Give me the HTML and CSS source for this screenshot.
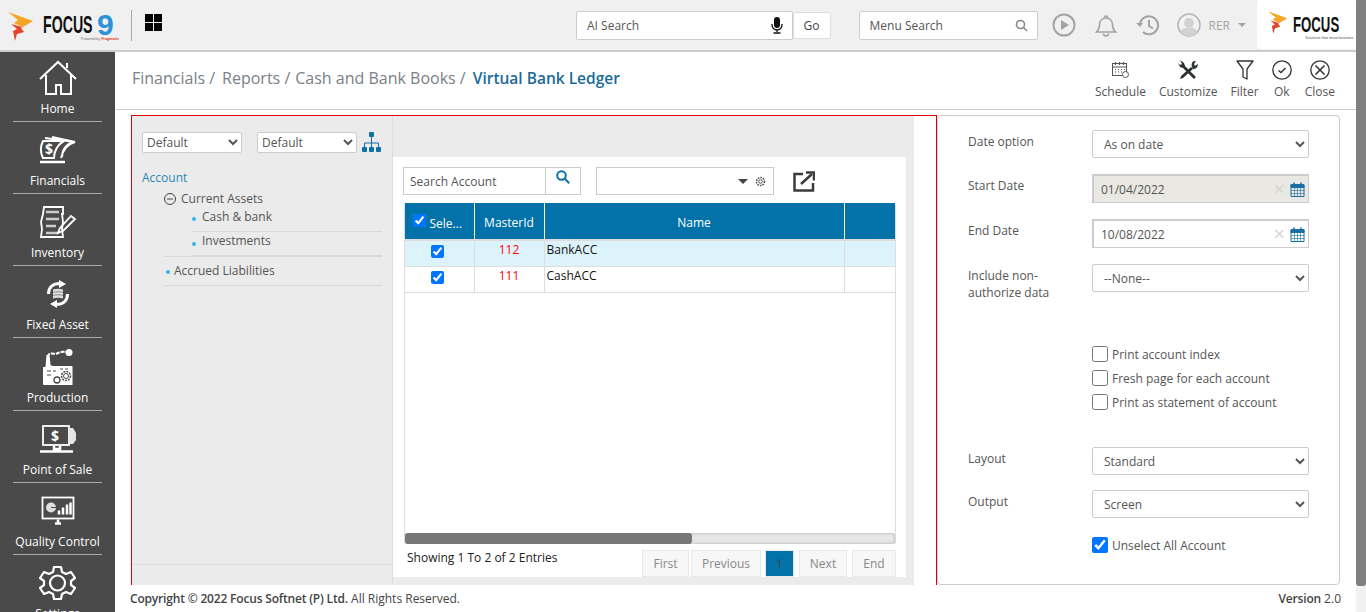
FILE: index.html
```html
<!DOCTYPE html>
<html lang="en">
<head>
    <meta charset="UTF-8">
    <meta name="viewport" content="width=device-width, initial-scale=1.0">
    <title>Virtual Bank Ledger</title>
    <link rel="stylesheet" href="styles.css">
</head>
<body>
<div class="page">
    <div class="topbar">
        <div class="brand">
            <svg class="brand-mark" width="26" height="29" viewBox="0 0 26 29">
                <polygon points="0,0 25,9 14,15 6,11 10,8" fill="#f5a623"/>
                <polygon points="25,9 13,16 16,20 9,22 7,29 5,19 9,17 3,12 14,15" fill="#e2452a"/>
            </svg>
            <div class="brand-name">
                <div class="brand-line"><span class="brand-focus">FOCUS</span><span class="brand-nine">9</span></div>
                <div class="brand-tag">Powered by <b>Pragmatic</b></div>
            </div>
        </div>
        <div class="top-divider"></div>
        <svg class="apps" width="17" height="17" viewBox="0 0 17 17" fill="#000">
            <rect width="8" height="8"/><rect x="9" width="8" height="8"/>
            <rect y="9" width="8" height="8"/><rect x="9" y="9" width="8" height="8"/>
        </svg>

        <div class="ai-search">
            <input class="top-input" type="text" placeholder="AI Search">
            <svg width="12" height="17" viewBox="0 0 12 17">
                <rect x="3" y="0" width="6" height="11" rx="3" fill="#111"/>
                <path d="M1 7v1a5 5 0 0 0 10 0V7M6 13v2M2.500 16h7" fill="none" stroke="#111" stroke-width="1.300"/>
            </svg>
        </div>
        <button class="go-btn">Go</button>
        <div class="menu-search">
            <input class="top-input" type="text" placeholder="Menu Search">
            <svg width="13" height="13" viewBox="0 0 13 13" fill="none" stroke="#888" stroke-width="1.600">
                <circle cx="5.500" cy="5.500" r="4"/><path d="M8.500 8.500l3.500 3.500"/>
            </svg>
        </div>

        <div class="top-icons">
            <svg width="24" height="24" viewBox="0 0 24 24" fill="none" stroke="#a3a3a3" stroke-width="2">
                <circle cx="12" cy="12" r="10.500"/><polygon points="9,7 17,12 9,17" fill="#a3a3a3" stroke="none"/>
            </svg>
            <svg width="22" height="24" viewBox="0 0 22 24" fill="none" stroke="#a3a3a3" stroke-width="1.600">
                <path d="M1.500 19c2-2 3-3 3-7 0-4 2.500-7 6.500-7s6.500 3 6.500 7c0 4 1 5 3 7z"/>
                <path d="M9.500 4.500a1.500 1.500 0 0 1 3 0M8.500 20.500a2.500 2.500 0 0 0 5 0"/>
            </svg>
            <svg width="24" height="22" viewBox="0 0 24 22" fill="none" stroke="#a3a3a3" stroke-width="2">
                <path d="M4 11a9 9 0 1 1 3 7"/><path d="M13 6v6l4 2.500"/>
                <polygon points="0,9 7,9 4,13" fill="#a3a3a3" stroke="none"/>
            </svg>
            <svg class="avatar" width="24" height="24" viewBox="0 0 24 24">
                <circle cx="12" cy="12" r="11" fill="#f2f2f2" stroke="#b5b5b5" stroke-width="1.500"/>
                <circle cx="12" cy="10" r="5" fill="#d2d2d2"/>
                <path d="M3.500 19c2-4 5-4.500 8.500-4.500s6.500.5 8.500 4.500a11 11 0 0 1-17 0z" fill="#d2d2d2"/>
            </svg>
            <span class="user-name">RER</span>
            <span class="user-caret"></span>
        </div>

        <div class="company-logo">
            <svg width="20" height="25" viewBox="0 0 26 29">
                <polygon points="0,0 25,9 14,15 6,11 10,8" fill="#f5a623"/>
                <polygon points="25,9 13,16 16,20 9,22 7,29 5,19 9,17 3,12 14,15" fill="#e2452a"/>
            </svg>
            <div class="company-name">
                <div class="company-focus"><span>FOCUS</span></div>
                <div class="company-tag">Solutions that move business</div>
            </div>
        </div>
    </div>

    <div class="workspace">
        <div class="sidebar">
            <div class="side-item">
                <svg width="38" height="36" viewBox="0 0 38 36" fill="none" stroke="#fff" stroke-width="2">
                    <path d="M1 19L19 2l18 17M28 8V3M7 15v19h10v-9h5v9h10V15"/>
                </svg>
                <span>Home</span>
            </div>
            <div class="side-item">
                <svg width="38" height="28" viewBox="0 0 38 28" fill="none" stroke="#fff" stroke-width="2">
                    <path d="M4 5C1 11 1 16 4 22h11c0-7 4-14 10-17z"/>
                    <path d="M6 2l30 4c-8 2-12 8-14 16M13 1l23 5c-9 1-13 8-13 15"/>
                    <path d="M1 26h25" stroke-width="2.500"/>
                    <text x="6" y="18" class="icon-dollar">$</text>
                </svg>
                <span>Financials</span>
            </div>
            <div class="side-item">
                <svg width="38" height="32" viewBox="0 0 38 32" fill="none" stroke="#fff" stroke-width="1.800">
                    <path d="M5 1h19v7h-1l1 8-1 7 1 8H2l1-8-1-7 2-8z"/>
                    <path d="M7 6h13M7 13h13M7 20h10M7 27h13" stroke-width="2.500" stroke="#ccc"/>
                    <path d="M21 22l11-12 4 3-12 12-5 2z"/>
                </svg>
                <span>Inventory</span>
            </div>
            <div class="side-item">
                <svg width="24" height="28" viewBox="0 0 24 28" fill="none" stroke="#fff" stroke-width="3">
                    <path d="M2.500 14C2.500 7 7 3.500 14 3.500"/>
                    <path d="M21.500 14c0 7-4.500 10.500-11.500 10.500"/>
                    <polygon points="13,0 20,4 13,8" fill="#fff" stroke="none"/>
                    <polygon points="11,20 4,24 11,28" fill="#fff" stroke="none"/>
                    <path d="M7 9.500c3-1 7-1 10 0v9c-3-1-7-1-10 0z" fill="#ddd" stroke="none"/>
                    <path d="M7 12.500c3-1 7-1 10 0M7 15.500c3-1 7-1 10 0" stroke="#777" stroke-width=".8"/>
                </svg>
                <span>Fixed Asset</span>
            </div>
            <div class="side-item">
                <svg width="32" height="36" viewBox="0 0 32 36" fill="#fff">
                    <path d="M2 36a1 1 0 0 1-1-1V18h2.500l1-12h3l1 10 2 1h19a1 1 0 0 1 1 1v18z"/>
                    <path d="M6 8c0-3 2-4 4-3.500s4 .5 6-.5 5-1 8-1.500" fill="none" stroke="#fff" stroke-width="2" stroke-dasharray="4 1"/>
                    <circle cx="27" cy="3.500" r="3.500"/>
                    <circle cx="24" cy="27" r="4.500" fill="none" stroke="#4a4a4a" stroke-width="1.500" stroke-dasharray="2 1"/>
                    <circle cx="24" cy="27" r="2.500" fill="none" stroke="#4a4a4a"/>
                    <circle cx="15" cy="31" r="3" fill="none" stroke="#4a4a4a" stroke-width="1.300"/>
                    <path d="M5 22h4M11 22h3M18 20h3M23 20h3M5 26h4" stroke="#888" stroke-width="1.300"/>
                </svg>
                <span>Production</span>
            </div>
            <div class="side-item">
                <svg width="38" height="28" viewBox="0 0 38 28" fill="none" stroke="#fff" stroke-width="1.800">
                    <rect x="4" y="1" width="26" height="19"/>
                    <path d="M30 3h4l3 5v7l-3 4h-4z" fill="#e6e6e6" stroke="none"/>
                    <path d="M15 21v3h6v-3M1 26.500h33" stroke-width="2.500"/>
                    <text x="12" y="16" class="icon-dollar">$</text>
                </svg>
                <span>Point of Sale</span>
            </div>
            <div class="side-item">
                <svg width="34" height="29" viewBox="0 0 34 29" fill="none" stroke="#fff" stroke-width="1.800">
                    <rect x="1.500" y="1" width="31" height="21"/>
                    <circle cx="10" cy="11" r="5" fill="#ddd" stroke="none"/>
                    <path d="M10 11l5 0" stroke="#4a4a4a" stroke-width="1"/>
                    <path d="M18 18v-4M22 18v-7M26 18V8M29.500 18V6" stroke-width="2.500"/>
                    <path d="M14 27h6M17 23v3" stroke-width="2.500"/>
                </svg>
                <span>Quality Control</span>
            </div>
            <div class="side-item">
                <svg width="37" height="36" viewBox="0 0 37 36" fill="none" stroke="#fff" stroke-width="2.200">
                    <circle cx="18.500" cy="18" r="7.500"/>
                    <path d="M15 2h7l1 5 4 2 5-2 4 6-4 3v4l4 3-4 6-5-2-4 2-1 5h-7l-1-5-4-2-5 2-4-6 4-3v-4l-4-3 4-6 5 2 4-2z" stroke-linejoin="round"/>
                </svg>
                <span>Settings</span>
            </div>
        </div>

        <div class="main">
            <div class="page-head">
                <div class="breadcrumb">
                    <span class="crumb-first">Financials /</span><span>Reports /</span><span>Cash and Bank Books /</span>
                    <strong>Virtual Bank Ledger</strong>
                </div>
                <div class="actions">
                    <div class="action">
                        <svg width="20" height="18" viewBox="0 0 20 18" fill="none" stroke="#555">
                            <rect x="2.500" y="2.500" width="14" height="12"/>
                            <path d="M2.500 6h14M5.500 1v3M9.500 1v3M13.500 1v3M5 8.500h1M8 8.500h1M11 8.500h1M14 8.500h1M5 11h1M8 11h1M11 11h1M14 11h1" stroke-width="1.200"/>
                            <circle cx="15.500" cy="13.500" r="3" fill="#fff"/>
                        </svg>
                        <span>Schedule</span>
                    </div>
                    <div class="action">
                        <svg width="22" height="20" viewBox="0 0 22 20" fill="#2e3133">
                            <path d="M2 1l4 3 1 3 11 11-2 2L5 9 2 8 0 4l2 2 2-1z" transform="translate(1 -1)"/>
                            <path d="M14 7L4 16l-1 3 3-1 10-9zM15 7c-1-3 0-6 3-6l1 0-2 3 1 2 3-2c0 3-2 5-5 5z"/>
                        </svg>
                        <span>Customize</span>
                    </div>
                    <div class="action">
                        <svg width="18" height="20" viewBox="0 0 18 20" fill="none" stroke="#333" stroke-width="1.300">
                            <path d="M1 1h16l-6 8v10l-4-2V9z" stroke-linejoin="round"/>
                        </svg>
                        <span>Filter</span>
                    </div>
                    <div class="action">
                        <svg width="20" height="20" viewBox="0 0 20 20" fill="none" stroke="#333" stroke-width="1.300">
                            <circle cx="10" cy="10" r="9.200"/><path d="M6.500 10.500l2.500 2 4.500-4.500" stroke-width="1.500"/>
                        </svg>
                        <span>Ok</span>
                    </div>
                    <div class="action">
                        <svg width="20" height="20" viewBox="0 0 20 20" fill="none" stroke="#333" stroke-width="1.300">
                            <circle cx="10" cy="10" r="9.200"/><path d="M5.500 5.500l9 9M14.500 5.500l-9 9" stroke-width="1.600"/>
                        </svg>
                        <span>Close</span>
                    </div>
                </div>
            </div>

            <div class="content">
                <div class="selection">
                    <div class="tree-panel">
                        <div class="tree-tools">
                            <select class="tree-select"><option>Default</option></select>
                            <select class="tree-select"><option>Default</option></select>
                            <svg width="19" height="21" viewBox="0 0 19 21" fill="#106fa5">
                                <rect x="7" y="0" width="5" height="5" rx="1"/>
                                <path d="M9.500 5v10M2.500 15v-4h14v4" fill="none" stroke="#106fa5"/>
                                <rect x="0" y="15" width="5" height="5" rx="1"/><rect x="7" y="15" width="5" height="5" rx="1"/><rect x="14" y="15" width="5" height="5" rx="1"/>
                            </svg>
                        </div>
                        <div class="tree-root">Account</div>
                        <div class="tree-branch">
                            <div class="tree-parent">
                                <svg width="12" height="12" viewBox="0 0 12 12" fill="none" stroke="#444">
                                    <circle cx="6" cy="6" r="5.500"/><path d="M3 6h6"/>
                                </svg>
                                <span>Current Assets</span>
                            </div>
                            <div class="tree-leaf first-leaf">Cash &amp; bank</div>
                            <div class="tree-leaf">Investments</div>
                        </div>
                        <div class="tree-branch tree-single">Accrued Liabilities</div>
                        <div class="tree-bottom"></div>
                    </div>

                    <div class="list-panel">
                        <div class="list-card">
                            <div class="list-tools">
                                <div class="search-account">
                                    <input type="text" placeholder="Search Account">
                                    <button>
                                        <svg width="14" height="14" viewBox="0 0 14 14" fill="none" stroke="#106fa5" stroke-width="2">
                                            <circle cx="5.500" cy="5.500" r="4.300"/><path d="M8.800 8.800l4.400 4.400"/>
                                        </svg>
                                    </button>
                                </div>
                                <div class="column-filter">
                                    <span class="filter-caret"></span>
                                    <svg width="11" height="11" viewBox="0 0 11 11" fill="none" stroke="#555">
                                        <circle cx="5.500" cy="5.500" r="1.800"/>
                                        <circle cx="5.500" cy="5.500" r="4" stroke-width="1.600" stroke-dasharray="1.600 1"/>
                                    </svg>
                                </div>
                                <svg class="export" width="22" height="21" viewBox="0 0 22 21" fill="none" stroke="#3c3c3c" stroke-width="2.500">
                                    <path d="M10 3H1.500v16.500H20V12"/>
                                    <path d="M8 13L19 3"/><path d="M13 1.500h8v8" />
                                </svg>
                            </div>

                            <div class="grid-wrap">
                                <table class="grid">
                                    <thead>
                                        <tr>
                                            <th class="col-sel"><input type="checkbox" checked> Sele...</th>
                                            <th class="col-id">MasterId</th>
                                            <th class="col-name">Name</th>
                                            <th></th>
                                        </tr>
                                    </thead>
                                    <tbody>
                                        <tr class="row-active">
                                            <td class="cell-check"><input type="checkbox" checked></td>
                                            <td class="cell-id">112</td>
                                            <td>BankACC</td>
                                            <td></td>
                                        </tr>
                                        <tr>
                                            <td class="cell-check"><input type="checkbox" checked></td>
                                            <td class="cell-id">111</td>
                                            <td>CashACC</td>
                                            <td></td>
                                        </tr>
                                    </tbody>
                                </table>
                                <div class="h-scroll"><div class="h-thumb"></div></div>
                            </div>

                            <div class="list-foot">
                                <span class="entries">Showing 1 To 2 of 2 Entries</span>
                                <div class="pager">
                                    <button class="pg-first">First</button>
                                    <button class="pg-prev">Previous</button>
                                    <button class="pg-num">1</button>
                                    <button class="pg-next">Next</button>
                                    <button class="pg-end">End</button>
                                </div>
                            </div>
                        </div>
                    </div>
                </div>

                <div class="options">
                    <div class="form-row row-date-option">
                        <label>Date option</label>
                        <select class="form-select"><option>As on date</option></select>
                    </div>
                    <div class="form-row row-start">
                        <label>Start Date</label>
                        <div class="date-box date-disabled">
                            <input type="text" value="01/04/2022">
                            <span class="date-clear">×</span>
                            <svg width="15" height="15" viewBox="0 0 15 15" fill="none" stroke="#1a6ea3">
                                <path d="M1 3h13v11.500H1z"/><path d="M1 2.500h13v3H1z" fill="#1a6ea3"/>
                                <path d="M4 .5v3M11 .5v3" stroke-width="1.500"/>
                                <path d="M1 8.500h13M1 11.500h13M4.500 5v9M7.500 5v9M10.500 5v9" stroke-width=".6"/>
                            </svg>
                        </div>
                    </div>
                    <div class="form-row row-end">
                        <label>End Date</label>
                        <div class="date-box">
                            <input type="text" value="10/08/2022">
                            <span class="date-clear">×</span>
                            <svg width="15" height="15" viewBox="0 0 15 15" fill="none" stroke="#1a6ea3">
                                <path d="M1 3h13v11.500H1z"/><path d="M1 2.500h13v3H1z" fill="#1a6ea3"/>
                                <path d="M4 .5v3M11 .5v3" stroke-width="1.500"/>
                                <path d="M1 8.500h13M1 11.500h13M4.500 5v9M7.500 5v9M10.500 5v9" stroke-width=".6"/>
                            </svg>
                        </div>
                    </div>
                    <div class="form-row row-none">
                        <label>Include non-authorize data</label>
                        <select class="form-select"><option>--None--</option></select>
                    </div>

                    <div class="check-group">
                        <label class="check"><input type="checkbox">Print account index</label>
                        <label class="check"><input type="checkbox">Fresh page for each account</label>
                        <label class="check"><input type="checkbox">Print as statement of account</label>
                    </div>

                    <div class="form-row row-layout">
                        <label>Layout</label>
                        <select class="form-select"><option>Standard</option></select>
                    </div>
                    <div class="form-row row-output">
                        <label>Output</label>
                        <select class="form-select"><option>Screen</option></select>
                    </div>
                    <div class="check-group check-last">
                        <label class="check"><input type="checkbox" checked>Unselect All Account</label>
                    </div>
                </div>
            </div>

            <div class="footer">
                <span><b>Copyright © 2022 Focus Softnet (P) Ltd.</b> All Rights Reserved.</span>
                <span><b>Version</b> 2.0</span>
            </div>
        </div>
    </div>
</div>
<div class="page-scroll"><div class="page-thumb"></div></div>
</body>
</html>
```

FILE: styles.css
```css
* {
    box-sizing: border-box;
}

html, body {
    margin: 0;
    padding: 0;
    height: 100%;
}

body {
    display: flex;
    overflow: hidden;
    font-family: "Open Sans", sans-serif;
    font-size: 12px;
    color: #555;
    background-color: #fff;
}

input, select, button {
    font-family: "Open Sans", sans-serif;
    font-size: 12px;
}

.page {
    flex: 1;
    min-width: 0;
    display: flex;
    flex-direction: column;
}

/* Page scrollbar */
.page-scroll {
    width: 10px;
    background-color: #f1f1f1;
}

.page-thumb {
    height: 586px;
    background-color: #808080;
    border-radius: 0 0 3px 3px;
}

/* Top bar */
.topbar {
    height: 52px;
    flex: none;
    display: flex;
    align-items: center;
    background-color: #f0f0f0;
    border-bottom: 2px solid #ccc;
}

.brand {
    display: flex;
    align-items: center;
    width: 131px;
    flex: none;
    padding-left: 8px;
}

.brand-mark {
    margin-top: 3px;
}

.brand-name {
    margin-left: 9px;
    width: 76px;
}

.brand-line {
    display: flex;
    align-items: center;
    height: 32px;
}

/* no narrow face installed, so squeeze the bold one */
.brand-focus {
    display: inline-block;
    width: 49px;
    font-family: "Liberation Sans", sans-serif;
    font-weight: 700;
    font-size: 24px;
    color: #111;
    transform: scaleX(0.59);
    transform-origin: left center;
}

.brand-nine {
    margin-left: 5px;
    font-family: "Liberation Sans", sans-serif;
    font-weight: 700;
    font-size: 30px;
    color: #2c94d6;
}

.brand-tag {
    margin-top: -4px;
    font-size: 3.500px;
    line-height: 4px;
    text-align: right;
    white-space: nowrap;
    color: #555;
}

.brand-tag b {
    color: #e2452a;
}

.top-divider {
    width: 1px;
    height: 31px;
    flex: none;
    background-color: #aaa;
}

.apps {
    flex: none;
    margin-left: 13px;
    margin-bottom: 5px;
}

.ai-search,
.menu-search {
    display: flex;
    align-items: center;
    height: 29px;
    background-color: #fff;
    border: 1px solid #ccc;
    border-radius: 2px;
    padding-right: 9px;
}

.ai-search {
    width: 217px;
    margin-left: 414px;
}

.menu-search {
    width: 179px;
    margin-left: 28px;
    padding-right: 9px;
}

.top-input {
    flex: 1;
    min-width: 0;
    border: 0;
    outline: 0;
    padding: 0 0 0 10px;
    background: transparent;
    font-size: 12px;
}

.top-input::placeholder {
    color: #555;
    opacity: 1;
}

.go-btn {
    width: 38px;
    height: 27px;
    padding: 0;
    background-color: #fff;
    border: 1px solid #ddd;
    border-radius: 2px;
    color: #444;
}

.top-icons {
    display: flex;
    align-items: center;
    width: 220px;
    padding-left: 14px;
    gap: 19px;
}

.avatar {
    margin-left: -2px;
}

.user-name {
    margin-left: -11px;
    color: #a3a3a3;
}

.user-caret {
    margin-left: -11px;
    width: 0;
    height: 0;
    border-left: 4px solid transparent;
    border-right: 4px solid transparent;
    border-top: 4px solid #a3a3a3;
}

.company-logo {
    display: flex;
    align-items: center;
    width: 99px;
    height: 49px;
    margin-bottom: 2px;
    padding-left: 11px;
    background-color: #fff;
    border-radius: 3px;
}

.company-logo svg {
    margin-bottom: 3px;
}

.company-name {
    margin: 5px 0 0 5px;
    width: 60px;
}

.company-focus {
    height: 21px;
    font-family: "Liberation Sans", sans-serif;
    font-weight: 700;
    font-size: 22px;
    line-height: 21px;
    color: #111;
}

.company-focus span {
    display: inline-block;
    transform: scaleX(0.6);
    transform-origin: left center;
}

.company-tag {
    margin-left: -10px;
    font-size: 3.500px;
    line-height: 5px;
    white-space: nowrap;
    text-align: right;
    color: #333;
}

/* Workspace */
.workspace {
    flex: 1;
    min-height: 0;
    display: flex;
}

.sidebar {
    width: 115px;
    flex: none;
    overflow: hidden;
    background-color: #4a4a4a;
}

.side-item {
    height: 72.170px;
    margin: 0 13px;
    padding-bottom: 4px;
    display: flex;
    flex-direction: column;
    align-items: center;
    justify-content: flex-end;
    border-bottom: 1px solid #aaa;
    color: #fff;
    flex: none;
}

.side-item:first-child {
    height: 70px;
}

.side-item svg {
    height: 36px;
    margin-bottom: 5px;
    flex: none;
}

.side-item span {
    line-height: 16px;
    white-space: nowrap;
}

.side-item:last-child {
    height: 90px;
    justify-content: flex-start;
    padding-top: 10px;
    border-bottom: 0;
}

.icon-dollar {
    font-family: "Open Sans", sans-serif;
    font-weight: 700;
    font-size: 14px;
    fill: #fff;
    stroke: none;
}

.main {
    flex: 1;
    min-width: 0;
    display: flex;
    flex-direction: column;
}

.page-head {
    height: 58px;
    flex: none;
    margin-left: 1px;
    padding: 0 21px 0 16px;
    display: flex;
    align-items: center;
    justify-content: space-between;
    border-bottom: 1px solid #ccc;
}

.breadcrumb {
    display: flex;
    gap: 5px;
    margin-bottom: 6px;
    font-size: 16px;
    color: #7a8087;
}

.crumb-first {
    margin-right: 2px;
}

.breadcrumb strong {
    margin-left: 2px;
    font-size: 15.500px;
    font-weight: 600;
    color: #1b6a99;
}

.actions {
    display: flex;
    gap: 13px;
    margin-top: -1px;
}

.action {
    display: flex;
    flex-direction: column;
    align-items: center;
    gap: 3px;
    color: #555;
}

.action svg {
    height: 20px;
}

/* Content */
.content {
    flex: 1;
    min-height: 0;
    display: flex;
    padding: 5px 16px 0 16px;
}

.selection {
    width: 806px;
    flex: none;
    display: flex;
    border: 1px solid #e00000;
    border-bottom: 0;
}

.tree-panel {
    width: 261px;
    flex: none;
    display: flex;
    flex-direction: column;
    padding: 16px 10px 0;
    background-color: #ebebeb;
    border-right: 1px solid #ddd;
}

.tree-tools {
    display: flex;
    align-items: center;
    gap: 15px;
}

.tree-tools svg {
    margin-left: -10px;
}

.tree-select {
    width: 100px;
    height: 21px;
    padding: 0;
    background-color: #fff;
    border: 1px solid #ccc;
    border-radius: 2px;
    color: #555;
}

.tree-root {
    margin-top: 16px;
    line-height: 17px;
    color: #2b87b5;
}

.tree-branch {
    margin-left: 22px;
    color: #555;
}

.tree-parent {
    display: flex;
    align-items: center;
    gap: 5px;
    margin-top: 4px;
    line-height: 17px;
}

.tree-leaf {
    margin-left: 28px;
    height: 25px;
    padding: 0 0 0 10px;
    line-height: 17px;
    border-bottom: 1px solid #d8d8d8;
    position: relative;
}

.first-leaf {
    padding-top: 1px;
}

.tree-leaf:last-child {
    border-bottom-width: 2px;
}

.tree-leaf::before,
.tree-single::before {
    content: "";
    position: absolute;
    left: 0;
    top: 10px;
    width: 4px;
    height: 4px;
    border-radius: 50%;
    background-color: #35b6ee;
}

.tree-single {
    position: relative;
    height: 30px;
    padding: 5px 0 0 10px;
    line-height: 17px;
    border-top: 1px solid #d8d8d8;
    border-bottom: 1px solid #d8d8d8;
    margin-top: -1px;
}

.tree-single::before {
    top: 13px;
    left: 2px;
}

.tree-bottom {
    margin: auto -10px 20px;
    border-top: 1px solid #ddd;
}

.list-panel {
    flex: 1;
    min-width: 0;
    padding: 41px 30px 8px 0;
    background: linear-gradient(to right, #ebebeb 521px, #fff 521px);
    display: flex;
}

.list-card {
    flex: 1;
    min-width: 0;
    display: flex;
    flex-direction: column;
    padding: 10px 10px 0;
    background-color: #fff;
    box-shadow: 8px 0 0 #ebebeb;
}

.list-tools {
    display: flex;
    align-items: center;
    height: 28px;
    flex: none;
}

.search-account {
    display: flex;
    width: 178px;
    height: 28px;
    border: 1px solid #ccc;
}

.search-account input {
    flex: 1;
    min-width: 0;
    border: 0;
    outline: 0;
    padding: 0 0 0 6px;
}

.search-account input::placeholder {
    color: #555;
    opacity: 1;
}

.search-account button {
    width: 35px;
    padding: 0 0 4px;
    background-color: #fff;
    border: 0;
    border-left: 1px solid #ccc;
}

.column-filter {
    display: flex;
    align-items: center;
    justify-content: flex-end;
    gap: 7px;
    width: 178px;
    height: 28px;
    margin-left: 15px;
    padding-right: 7px;
    border: 1px solid #ccc;
}

.filter-caret {
    width: 0;
    height: 0;
    border-left: 5px solid transparent;
    border-right: 5px solid transparent;
    border-top: 5px solid #444;
}

.export {
    margin-left: 19px;
}

.grid-wrap {
    flex: 1;
    min-height: 0;
    margin-top: 8px;
    margin-left: 1px;
    display: flex;
    flex-direction: column;
    justify-content: space-between;
    border: 1px solid #ddd;
    border-top: 0;
    border-bottom: 0;
    border-radius: 3px 3px 0 0;
}

.grid {
    width: 100%;
    table-layout: fixed;
    border-collapse: collapse;
    font-size: 12px;
}

.grid th {
    height: 37px;
    padding: 3px 0 0;
    background-color: #0272a9;
    border-right: 1px solid #fff;
    border-bottom: 2px solid #ddd;
    font-weight: 400;
    font-size: 12px;
    color: #fff;
}

.grid th:last-child {
    border-right: 0;
}

.grid .col-sel {
    width: 69px;
    padding-right: 2px;
    white-space: nowrap;
}

.col-id {
    width: 70px;
}

.col-name {
    width: 300px;
}

.col-sel input {
    margin: 0 0 0 -1px;
    width: 13px;
    height: 13px;
    vertical-align: 1px;
}

.grid td {
    height: 26px;
    padding: 0 2px 8px;
    border-right: 1px solid #ddd;
    border-bottom: 1px solid #ddd;
    color: #111;
}

.grid td:last-child {
    border-right: 0;
}

.row-active td {
    background-color: #dcf3fc;
}

.grid .cell-check {
    text-align: center;
    padding: 0 4px 0 0;
}

.cell-check input {
    margin: 0;
    width: 13px;
    height: 13px;
}

.grid .cell-id {
    text-align: center;
    color: #f00;
}

.h-scroll {
    height: 11px;
    flex: none;
    background-color: #e6e6e6;
    border-radius: 3px;
    box-shadow: inset 0 0 3px #aaa;
}

.h-thumb {
    width: 287px;
    height: 100%;
    background-color: #777;
    border-radius: 3px;
}

.list-foot {
    flex: none;
    display: flex;
    justify-content: space-between;
    padding: 6px 0 0 4px;
}

.entries {
    color: #222;
    margin-top: -1px;
}

.pager {
    display: flex;
    gap: 2px;
}

.pager button {
    height: 27px;
    padding: 0;
    background-color: #f7f7f7;
    border: 1px solid #e8e8e8;
    color: #888;
}

.pg-first { width: 47px; }
.pg-prev { width: 70px; margin-right: 2px; }
.pager .pg-num {
    width: 29px;
    margin-right: 3px;
    background-color: #0272a9;
    color: #444;
}
.pg-next { width: 48px; margin-right: 3px; }
.pg-end { width: 44px; }

/* Options card */
.options {
    flex: 1;
    min-width: 0;
    display: flex;
    flex-direction: column;
    padding: 14px 30px 0;
    border: 1px solid #ccc;
    border-radius: 4px;
}

.form-row {
    display: flex;
    align-items: flex-start;
    flex: none;
}

.form-row label {
    width: 124px;
    flex: none;
    padding-right: 30px;
    line-height: 17px;
    color: #555;
    margin-top: 3px;
}

.form-select {
    width: 217px;
    height: 28px;
    padding-left: 7px;
    background-color: #fff;
    border: 1px solid #ccc;
    border-radius: 2px;
    color: #555;
}

.date-box {
    display: flex;
    align-items: center;
    width: 217px;
    height: 29px;
    padding-right: 3px;
    background-color: #fff;
    border: 1px solid #ccc;
    border-left-width: 2px;
    border-top-width: 2px;
    gap: 5px;
}

.date-box input {
    flex: 1;
    min-width: 0;
    border: 0;
    outline: 0;
    padding: 0 0 0 7px;
    background: transparent;
    color: #555;
}

.date-disabled {
    background-color: #e9e8e2;
}

.date-clear {
    font-size: 20px;
    line-height: 16px;
    color: #d5d5d5;
}

.row-start { margin-top: 16px; }
.row-start label { margin-top: 3px; }
.row-end { margin-top: 16px; }
.row-end label { margin-top: 3px; }
.row-none { margin-top: 16px; }
.row-layout { margin-top: 37px; }
.row-output { margin-top: 15px; }

.check-group {
    display: flex;
    flex-direction: column;
    gap: 8px;
    margin: 45px 0 0 124px;
    flex: none;
}

.check-group.check-last {
    margin-top: 19px;
}

.check {
    display: flex;
    align-items: center;
    height: 16px;
    color: #555;
    gap: 4px;
    white-space: nowrap;
}

.check input {
    width: 16px;
    height: 16px;
    margin: 0;
    flex: none;
}

/* Footer */
.footer {
    height: 27px;
    flex: none;
    display: flex;
    align-items: center;
    justify-content: space-between;
    padding: 0 15px 0 15px;
    background-color: #fff;
    color: #444;
}

.footer b {
    font-weight: 600;
    letter-spacing: -0.180px;
}
```
